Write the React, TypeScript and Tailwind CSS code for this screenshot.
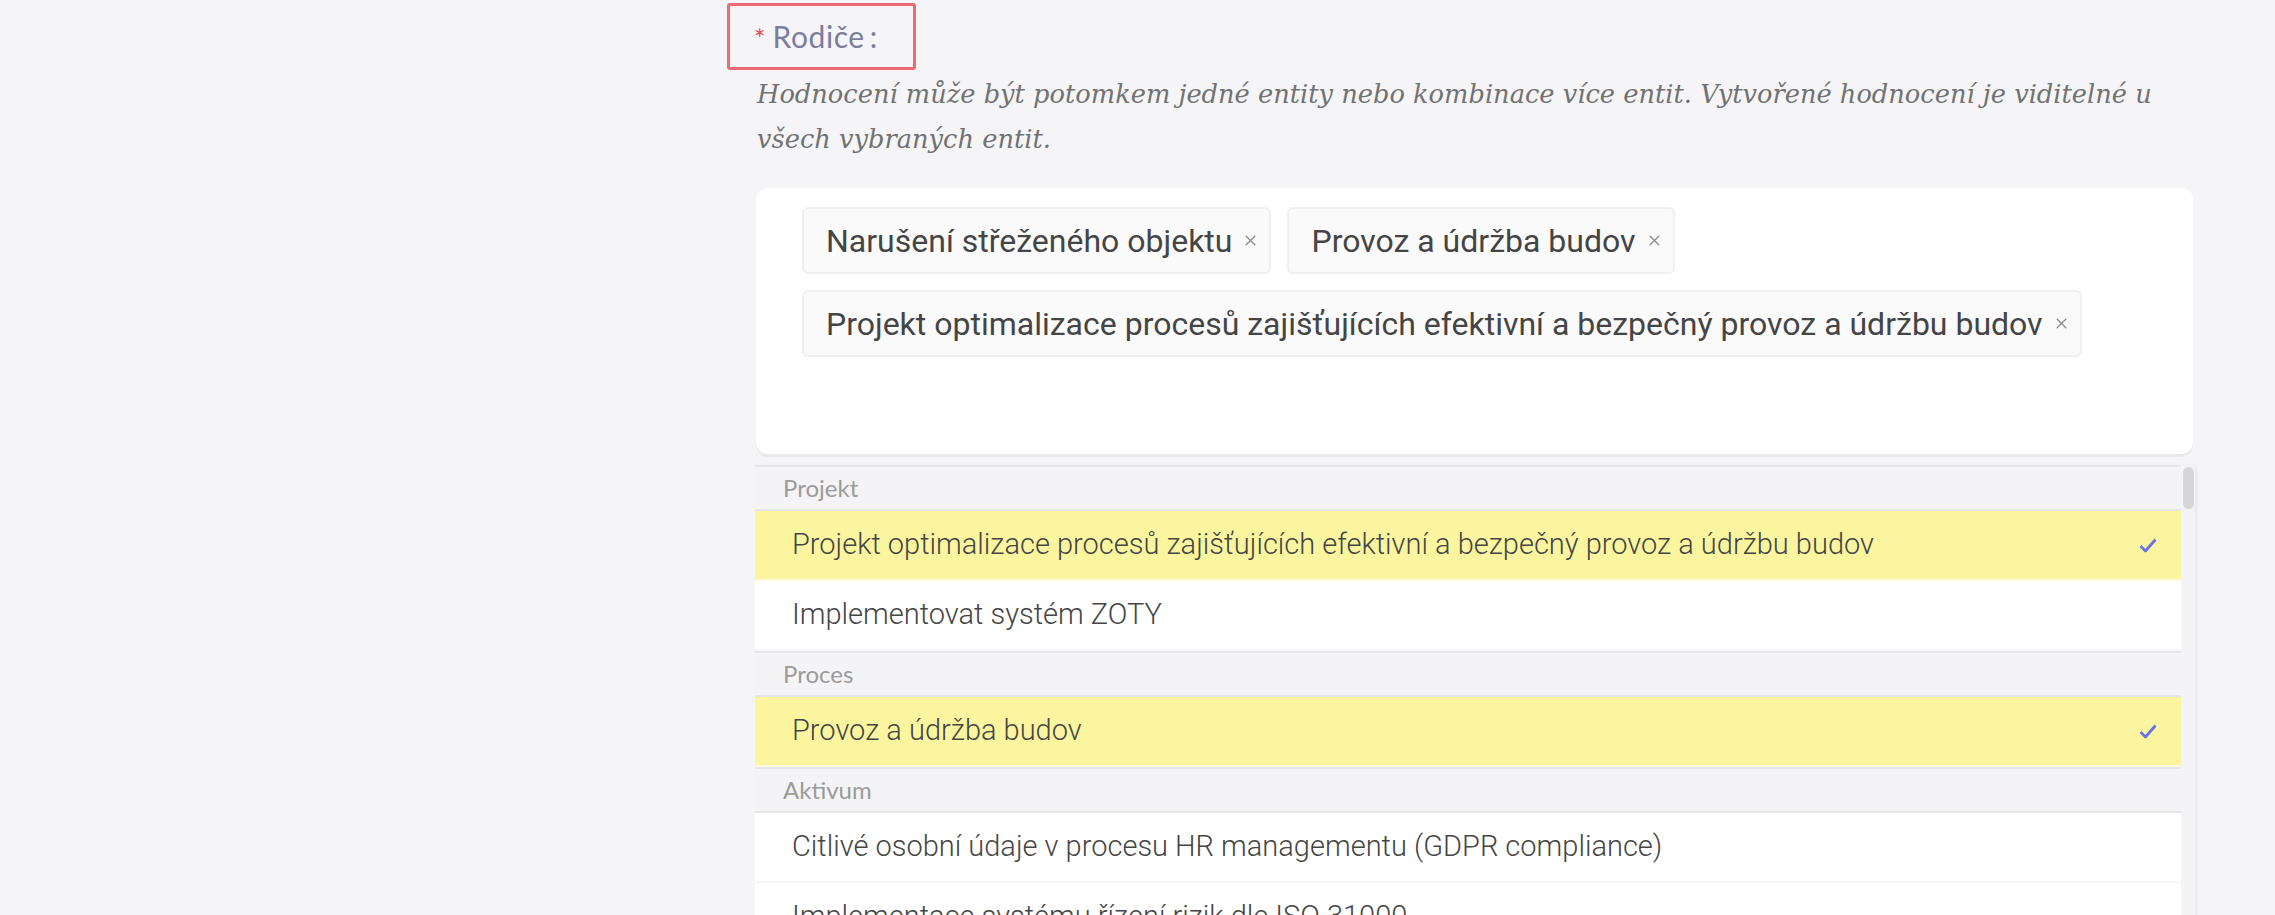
import React from 'react';

const tags = [
  'Narušení střeženého objektu',
  'Provoz a údržba budov',
  'Projekt optimalizace procesů zajišťujících efektivní a bezpečný provoz a údržbu budov',
];

type Row =
  | { kind: 'group'; label: string }
  | { kind: 'option'; label: string; selected?: boolean };

const rows: Row[] = [
  { kind: 'group', label: 'Projekt' },
  {
    kind: 'option',
    label: 'Projekt optimalizace procesů zajišťujících efektivní a bezpečný provoz a údržbu budov',
    selected: true,
  },
  { kind: 'option', label: 'Implementovat systém ZOTY' },
  { kind: 'group', label: 'Proces' },
  { kind: 'option', label: 'Provoz a údržba budov', selected: true },
  { kind: 'group', label: 'Aktivum' },
  { kind: 'option', label: 'Citlivé osobní údaje v procesu HR managementu (GDPR compliance)' },
  { kind: 'option', label: 'Implementace systému řízení rizik dle ISO 31000' },
];

function CloseIcon() {
  return (
    <svg width="13" height="13" viewBox="0 0 12 12" className="shrink-0">
      <path d="M2 2 L10 10 M10 2 L2 10" stroke="#8c8c8c" strokeWidth="1.2" strokeLinecap="round" />
    </svg>
  );
}

function CheckIcon() {
  return (
    <svg width="18" height="15" viewBox="0 0 18 15" className="shrink-0">
      <path d="M1.5 8 L6.5 13 L16.5 1.5" fill="none" stroke="#6b72e6" strokeWidth="2.8" strokeLinejoin="round" />
    </svg>
  );
}

function Tag({ label }: { label: string }) {
  return (
    <div className="flex h-[67px] items-center gap-[12px] rounded-[6px] border-2 border-[#f0f0f0] bg-[#fafafa] pl-[22px] pr-[12px]">
      <span className="font-['Roboto',sans-serif] text-[32px] leading-none text-[#454545]">{label}</span>
      <CloseIcon />
    </div>
  );
}

export default function App() {
  return (
    <div className="flex h-[915px] w-full overflow-hidden bg-[#f5f5f7]">
      {/* Left empty area */}
      <div className="w-[755px] shrink-0" />

      {/* Form field */}
      <div className="flex w-[1440px] shrink-0 flex-col">
        {/* Label with highlight outline */}
        <div className="mt-[3px] -ml-[28px] flex h-[67px] w-[189px] shrink-0 items-center rounded-[3px] border-[3px] border-[#ef6b73] pl-[24px] font-['Lato',sans-serif]">
          <span className="mr-[7px] pt-[4px] text-[27px] leading-none text-[#e5484d]">*</span>
          <span className="text-[30px] tracking-[0.02em] text-[#7a7da0]">Rodiče</span>
          <span className="ml-[5px] text-[30px] text-[#7a7da0]">:</span>
        </div>

        <p className="mt-[2px] w-full shrink-0 pl-[2px] font-['DejaVu_Serif',serif] text-[25.7px] italic leading-[45px] text-[#727272]">
          Hodnocení může být potomkem jedné entity nebo kombinace více entit. Vytvořené hodnocení je viditelné u všech vybraných entit.
        </p>

        {/* Select box */}
        <div className="mt-[26px] ml-[1px] h-[266px] w-[1437px] shrink-0 rounded-[12px] bg-white pl-[46px] pr-[20px] pt-[19px] shadow-[0_3px_0_#e9e9ec]">
          <div className="flex flex-wrap gap-[16px]">
            {tags.map((t) => (
              <Tag key={t} label={t} />
            ))}
          </div>
        </div>

        {/* Dropdown */}
        <div className="mt-[11px] flex w-[1440px] shrink-0 shadow-[2px_0_3px_rgba(0,0,0,0.05)]">
          <div className="flex-1 bg-white">
            {rows.map((r, i) =>
              r.kind === 'group' ? (
                <div
                  key={i}
                  className="flex h-[46px] items-center border-y-2 border-[#e6e6e9] bg-[#f4f4f6] pl-[28px] font-['Lato',sans-serif] text-[24px] text-[#9b9b9b]"
                >
                  {r.label}
                </div>
              ) : (
                <div
                  key={i}
                  className={
                    'flex h-[70px] items-center justify-between border-b-2 pl-[37px] pr-[24px] ' +
                    (r.selected ? 'border-[#fdfae0] bg-[#fbf5a0]' : 'border-[#f7f7f7] bg-white')
                  }
                >
                  <span className="font-['Roboto',sans-serif] text-[29px] font-light text-[#454545]">{r.label}</span>
                  {r.selected && <CheckIcon />}
                </div>
              ),
            )}
          </div>
          <div className="w-[14px] shrink-0 bg-[#f4f4f6] pt-[2px]">
            <div className="mx-auto h-[42px] w-[11px] rounded-full bg-[#d6d6d8]" />
          </div>
        </div>
      </div>
    </div>
  );
}
